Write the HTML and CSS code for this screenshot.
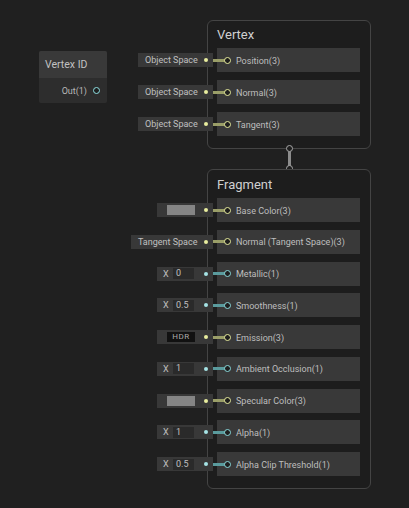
FILE: index.html
```html
<!doctype html>
<html lang="en">

<head>
    <meta charset="UTF-8">
    <title>Master Stack</title>
    <link rel="stylesheet" href="styles.css">
</head>

<body>
    <div class="graph">
        <div class="node">
            <div class="node--title">Vertex ID</div>
            <div class="node--out">Out(1) <span class="node--port"></span></div>
        </div>

        <div class="stack stack--vertex">
            <div class="stack--title">Vertex</div>
            <div class="blocks">
                <div class="block vec3">
                    <div class="inline inline--space"><span>Object Space</span><i class="dot"></i></div>
                    <span class="port"></span>Position(3)
                </div>
                <div class="block vec3">
                    <div class="inline inline--space"><span>Object Space</span><i class="dot"></i></div>
                    <span class="port"></span>Normal(3)
                </div>
                <div class="block vec3">
                    <div class="inline inline--space"><span>Object Space</span><i class="dot"></i></div>
                    <span class="port"></span>Tangent(3)
                </div>
            </div>
        </div>

        <div class="link">
            <span class="link--end"></span>
            <span class="link--bar"></span>
            <span class="link--end"></span>
        </div>

        <div class="stack stack--fragment">
            <div class="stack--title">Fragment</div>
            <div class="blocks">
                <div class="block vec3">
                    <div class="inline"><span class="swatch"></span><i class="dot"></i></div>
                    <span class="port"></span>Base Color(3)
                </div>
                <div class="block vec3">
                    <div class="inline inline--tangent"><span>Tangent Space</span><i class="dot"></i></div>
                    <span class="port"></span>Normal (Tangent Space)(3)
                </div>
                <div class="block vec1">
                    <div class="inline"><span class="axis">X</span><span class="field">0</span><i class="dot"></i></div>
                    <span class="port"></span>Metallic(1)
                </div>
                <div class="block vec1">
                    <div class="inline"><span class="axis">X</span><span class="field">0.5</span><i class="dot"></i></div>
                    <span class="port"></span>Smoothness(1)
                </div>
                <div class="block vec3">
                    <div class="inline"><span class="hdr">HDR</span><i class="dot"></i></div>
                    <span class="port"></span>Emission(3)
                </div>
                <div class="block vec1">
                    <div class="inline"><span class="axis">X</span><span class="field">1</span><i class="dot"></i></div>
                    <span class="port"></span>Ambient Occlusion(1)
                </div>
                <div class="block vec3">
                    <div class="inline"><span class="swatch"></span><i class="dot"></i></div>
                    <span class="port"></span>Specular Color(3)
                </div>
                <div class="block vec1">
                    <div class="inline"><span class="axis">X</span><span class="field">1</span><i class="dot"></i></div>
                    <span class="port"></span>Alpha(1)
                </div>
                <div class="block vec1">
                    <div class="inline"><span class="axis">X</span><span class="field">0.5</span><i class="dot"></i></div>
                    <span class="port"></span>Alpha Clip Threshold(1)
                </div>
            </div>
        </div>
    </div>
</body>

</html>
```

FILE: styles.css
```css
* {
    box-sizing: border-box;
}

body {
    margin: 0;
    background: #202020;
    font-family: Roboto, "Noto Sans", sans-serif;
    overflow: hidden;
}

.graph {
    position: relative;
    width: 409px;
    height: 508px;
}

/* standalone node */
.node {
    position: absolute;
    left: 39px;
    top: 51px;
    width: 68px;
    background: #2d2d2d;
    border-radius: 2px;
}

.node--title {
    height: 27px;
    line-height: 27px;
    padding-left: 6px;
    background: #393939;
    color: #c2c2c2;
    font-size: 10.5px;
    border-radius: 2px 2px 0 0;
}

.node--out {
    height: 25px;
    display: flex;
    align-items: center;
    justify-content: flex-end;
    gap: 6px;
    padding-right: 7px;
    color: #b8b8b8;
    font-size: 9px;
}

.node--port {
    width: 7px;
    height: 7px;
    border: 1.5px solid #8fe0e2;
    border-radius: 50%;
    background: #1e1e1e;
}

/* master stack */
.stack {
    position: absolute;
    left: 207px;
    width: 164px;
    padding: 0 10px 12px 9px;
    background: #1d1d1d;
    border: 1px solid #444444;
    border-radius: 6px;
}

.stack--vertex {
    top: 20px;
}

.stack--fragment {
    top: 169px;
    padding-top: 1px;
}

.stack--title {
    height: 27px;
    line-height: 28px;
    color: #d0d0d0;
    font-size: 13px;
}

.blocks {
    display: flex;
    flex-direction: column;
    gap: 8px;
}

.stack--fragment .blocks {
    gap: 7.75px;
}

.block {
    position: relative;
    height: 24px;
    display: flex;
    align-items: center;
    padding-left: 19px;
    padding-top: 1px;
    background: #393939;
    color: #bebebe;
    font-size: 9px;
    white-space: nowrap;
}

.block::before {
    content: "";
    position: absolute;
    left: -4px;
    top: 10.5px;
    width: 12px;
    height: 3px;
}

.port {
    position: absolute;
    left: 7px;
    top: 8.5px;
    width: 7px;
    height: 7px;
    border: 1.5px solid;
    border-radius: 50%;
    background: #1e1e1e;
    z-index: 1;
}

.vec3::before {
    background: #9a9e68;
}

.vec3 .port {
    border-color: #e6eb9c;
}

.vec3 .dot {
    background: #e8ed9e;
}

.vec1::before {
    background: #5a9b9d;
}

.vec1 .port {
    border-color: #8ad9db;
}

.vec1 .dot {
    background: #a6e4e6;
}

/* inline property controls */
.inline {
    position: absolute;
    right: calc(100% + 4px);
    top: 5px;
    width: 56px;
    height: 14px;
    display: flex;
    align-items: center;
    padding: 0 5px 0 6px;
    background: #383838;
    color: #c0c0c0;
    font-size: 9px;
}

.inline--space {
    width: 75px;
    padding-left: 7px;
}

.inline--tangent {
    width: 82px;
    padding-left: 7px;
}

.dot {
    width: 4px;
    height: 4px;
    margin-left: auto;
    border-radius: 50%;
}

.swatch {
    width: 28px;
    height: 10px;
    margin-left: 4px;
    background: #858585;
}

.hdr {
    width: 28px;
    height: 10px;
    margin-left: 4px;
    background: #111111;
    color: #acacac;
    font-size: 8px;
    line-height: 10px;
    text-align: center;
    letter-spacing: 0.6px;
}

.axis {
    width: 10px;
    font-size: 9px;
    color: #c0c0c0;
}

.field {
    width: 21px;
    height: 11px;
    line-height: 11px;
    padding-left: 3px;
    background: #2a2a2a;
    color: #c0c0c0;
    font-size: 9px;
}

/* link between stacks */
.link {
    position: absolute;
    left: 285.5px;
    top: 145px;
    width: 7px;
    display: flex;
    flex-direction: column;
    align-items: center;
}

.link--end {
    width: 7px;
    height: 7px;
    border: 1.5px solid #a8a8a8;
    border-radius: 50%;
    background: #1e1e1e;
}

.link--bar {
    width: 3px;
    height: 15px;
    margin: -1px 0;
    background: #8c8c8c;
}
```
